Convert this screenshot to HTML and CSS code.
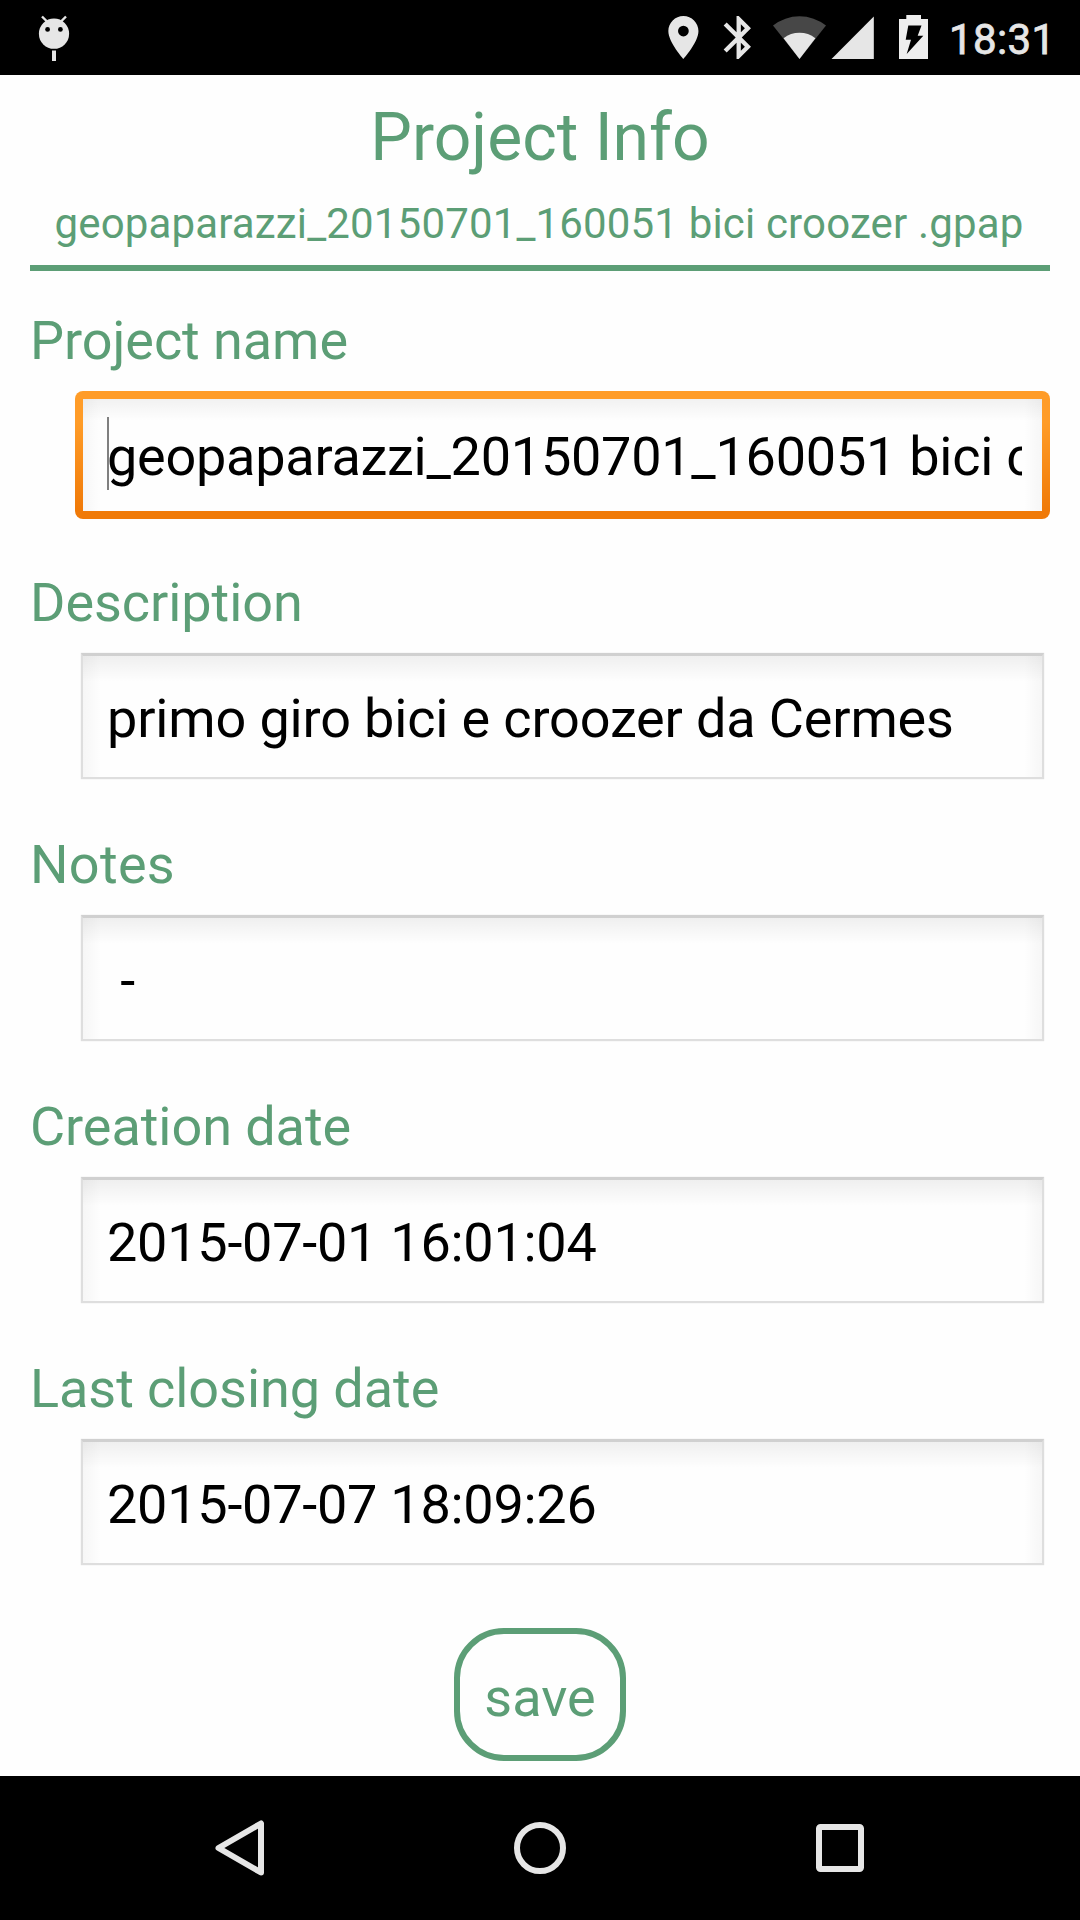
FILE: index.html
```html
<!DOCTYPE html>
<html lang="en">
<head>
<meta charset="utf-8">
<title>Project Info</title>
<link rel="stylesheet" href="styles.css">
</head>
<body>
<div class="screen">
  <header class="status-bar">
    <svg class="status-debug" width="40" height="75" viewBox="34 0 40 75">
      <path d="M42 16.5l6 6M66 16.5l-6 6" stroke="#e6e6e6" stroke-width="2.4"/>
      <circle cx="54" cy="33.7" r="15.1" fill="#e6e6e6"/>
      <circle cx="47.6" cy="29.4" r="2.4"/>
      <circle cx="60.4" cy="29.4" r="2.4"/>
      <path d="M52 50.5h4V61h-4z" fill="#e6e6e6"/>
    </svg>
    <svg class="status-icons" width="270" height="75" viewBox="660 0 270 75" fill="#e6e6e6">
      <path transform="translate(657.6 11.7) scale(2.15)" d="M12 2C8.13 2 5 5.13 5 9c0 5.25 7 13 7 13s7-7.75 7-13c0-3.87-3.13-7-7-7zm0 9.5a2.5 2.5 0 1 1 0-5 2.5 2.5 0 0 1 0 5z"/>
      <path transform="translate(712.9 11.7) scale(2.15)" d="M17.71 7.71L12 2h-1v7.59L6.41 5 5 6.41 10.59 12 5 17.59 6.41 19 11 14.41V22h1l5.71-5.71-4.3-4.29 4.3-4.29zM13 5.83l1.88 1.88L13 9.59V5.83zm1.88 10.46L13 18.17v-3.76l1.88 1.88z"/>
      <path d="M799.5 59L773 25.5A43 43 0 0 1 826 25.5z" fill="#474747"/>
      <path d="M799.5 59L783.6 38.2A26 26 0 0 1 815.4 38.2z"/>
      <path d="M831.5 59H873.8V16.5z"/>
      <path d="M899 19h7.3v-4h14.7v4H928v40h-29z" fill="#eee"/>
      <path d="M908.3 25.5H921.5L917.7 35.8H923.3L906.7 54L911 39.8H905.7z" fill="#000"/>
    </svg>
    <span class="clock">18:31</span>
  </header>

  <main class="content">
    <h1 class="title">Project Info</h1>
    <p class="subtitle">geopaparazzi_20150701_160051 bici croozer .gpap</p>

    <section class="field">
      <h2 class="label">Project name</h2>
      <div class="box focused"><span class="caret"></span><div class="value numeric">geopaparazzi_20150701_160051 bici croozer </div></div>
    </section>
    <section class="field">
      <h2 class="label">Description</h2>
      <div class="box"><div class="value">primo giro bici e croozer da Cermes</div></div>
    </section>
    <section class="field">
      <h2 class="label short">Notes</h2>
      <div class="box"><div class="value"> -</div></div>
    </section>
    <section class="field">
      <h2 class="label">Creation date</h2>
      <div class="box"><div class="value numeric">2015-07-01 16:01:04</div></div>
    </section>
    <section class="field">
      <h2 class="label">Last closing date</h2>
      <div class="box"><div class="value numeric">2015-07-07 18:09:26</div></div>
    </section>

    <button class="save">save</button>
  </main>

  <nav class="nav-bar">
    <svg width="60" height="60" viewBox="0 0 60 60"><path d="M51 5.5V54.5L8.5 30z"/></svg>
    <svg width="60" height="60" viewBox="0 0 60 60"><circle cx="30" cy="30" r="23"/></svg>
    <svg width="60" height="60" viewBox="0 0 60 60"><rect x="9" y="9" width="42" height="42" rx="1.5"/></svg>
  </nav>
</div>
</body>
</html>
```
FILE: styles.css
```css
* { box-sizing: border-box; }

body {
  margin: 0;
  background: #fefefe;
  font-family: Roboto, "Liberation Sans", sans-serif;
  color: #000;
}

.screen {
  display: flex;
  flex-direction: column;
  width: 1080px;
  height: 1920px;
  overflow: hidden;
}

.status-bar {
  display: flex;
  align-items: center;
  flex: none;
  height: 75px;
  padding: 0 28px 0 34px;
  background: #000;
}

.status-icons { margin-left: auto; }

.clock {
  width: 103px;
  margin: 4px 0 0 19px;
  font-size: 42px;
  line-height: 49px;
  font-weight: 400;
  letter-spacing: 0.4px;
  color: #e6e6e6;
  -webkit-text-stroke: 0.8px #e6e6e6;
  white-space: nowrap;
}

.content {
  display: flex;
  flex-direction: column;
  flex: 1;
  padding: 24px 30px 0;
}

.title,
.subtitle,
.label {
  margin: 0;
  font-weight: 400;
  color: #5c9e76;
  white-space: nowrap;
}

.title {
  font-size: 66px;
  line-height: 77px;
  text-align: center;
}

.subtitle {
  margin: 23px 0 38px;
  padding: 0 2px 17px 0;
  border-bottom: 6px solid #5c9e76;
  font-size: 42px;
  line-height: 49px;
  letter-spacing: 0.16px;
  text-align: center;
}

.field { height: 262px; flex: none; }

.label {
  font-size: 54px;
  line-height: 63px;
  letter-spacing: -0.06px;
}

.label.short { letter-spacing: 0.3px; }

.box {
  position: relative;
  height: 126px;
  margin: 19px 6px 0 51px;
  padding: 31px 20px 0 24px;
  border: 2px solid #dedede;
  border-top: 3px solid #d0d0d0;
  background:
    linear-gradient(to right, rgba(0, 0, 0, 0.03), transparent 18px),
    linear-gradient(to left, rgba(0, 0, 0, 0.03), transparent 18px),
    linear-gradient(to bottom, rgba(0, 0, 0, 0.06), transparent 26px);
  box-shadow: 0 0 1px rgba(0, 0, 0, 0.15);
}

.box.focused {
  height: 128px;
  margin: 19px 0 0 45px;
  padding: 26px 20px 0 24px;
  border: 8px solid transparent;
  border-radius: 8px;
  background:
    linear-gradient(to right, rgba(0, 0, 0, 0.03), transparent 18px) padding-box,
    linear-gradient(to left, rgba(0, 0, 0, 0.03), transparent 18px) padding-box,
    linear-gradient(to bottom, rgba(0, 0, 0, 0.05), transparent 22px) padding-box,
    linear-gradient(#fefefe, #fefefe) padding-box,
    linear-gradient(#ff9c28 25%, #f07a08 92%) border-box;
  box-shadow: none;
}

.value {
  overflow: hidden;
  font-size: 54px;
  line-height: 63px;
  letter-spacing: -0.15px;
  white-space: pre;
}

.value.numeric { letter-spacing: -0.25px; }

.caret {
  position: absolute;
  left: 24px;
  top: 18px;
  width: 2px;
  height: 73px;
  background: #808080;
}

.save {
  align-self: center;
  width: 172px;
  height: 133px;
  margin-top: 9px;
  padding: 5px 0 0;
  border: 6px solid #5c9e76;
  border-radius: 50px;
  background: transparent;
  font: 400 54px/63px Roboto, "Liberation Sans", sans-serif;
  color: #5c9e76;
}

.nav-bar {
  display: grid;
  grid-template-columns: repeat(3, 300px);
  place-content: center;
  place-items: center;
  flex: none;
  height: 144px;
  background: #000;
}

.nav-bar svg {
  fill: none;
  stroke: #e6e6e6;
  stroke-width: 6;
  stroke-linejoin: round;
}
```
